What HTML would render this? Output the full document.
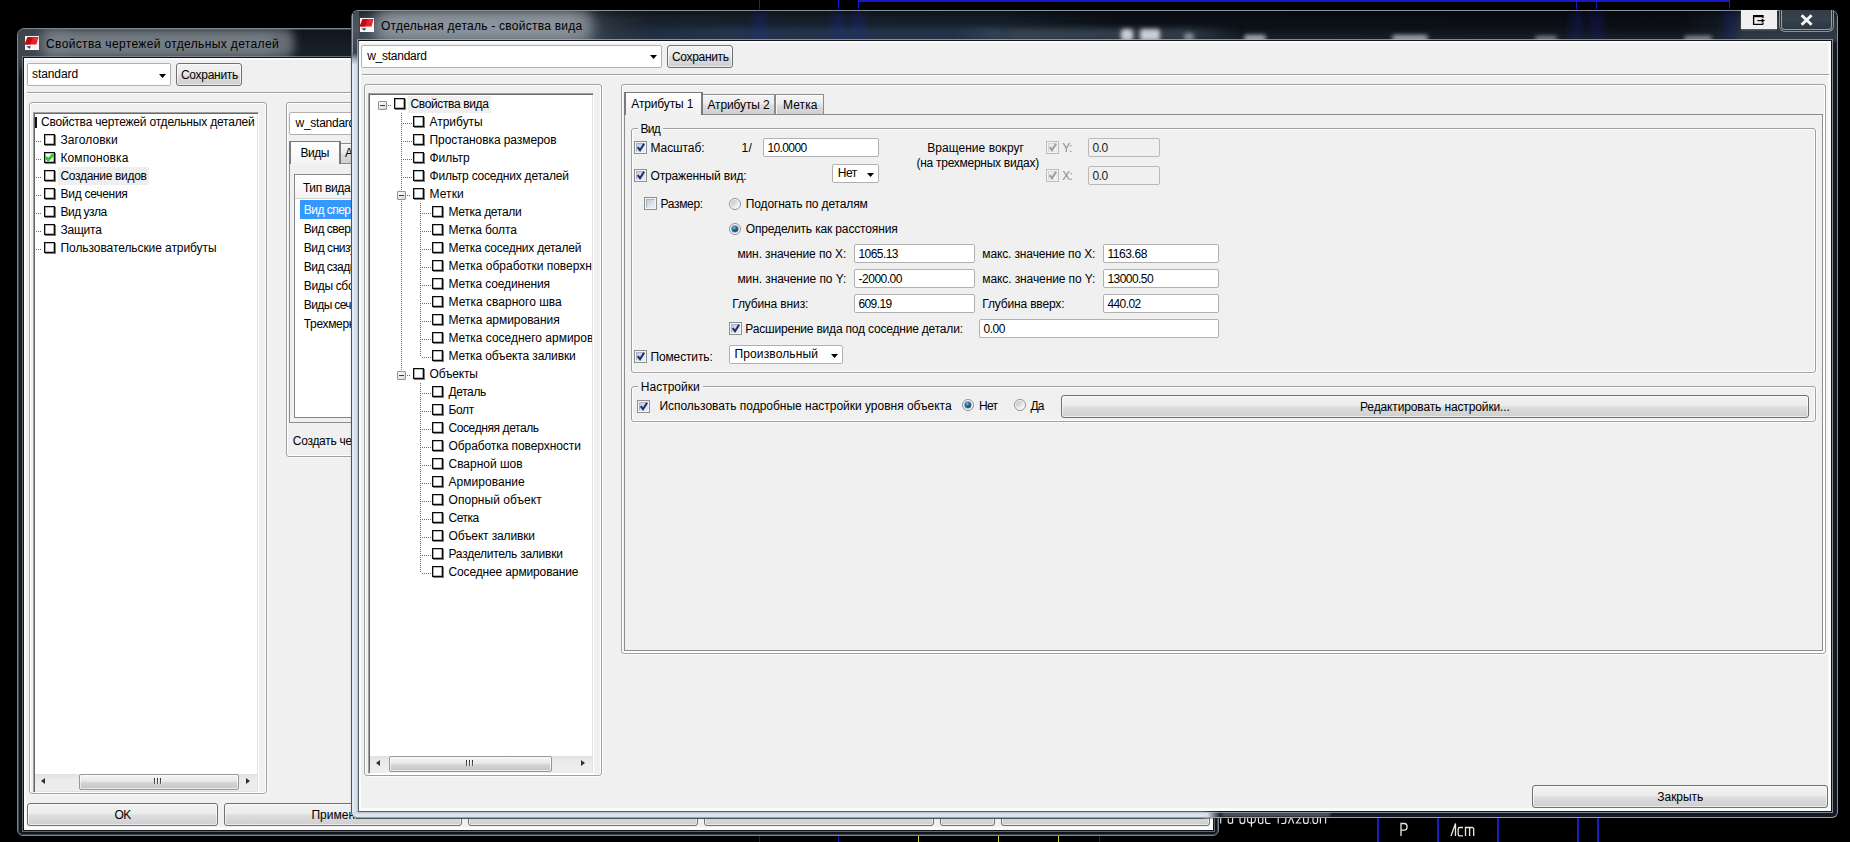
<!DOCTYPE html>
<html lang="ru"><head><meta charset="utf-8"><title>Tekla dialogs</title>
<style>
html,body{margin:0;padding:0;background:#000;}
body{width:1850px;height:842px;overflow:hidden;position:relative;font-family:"Liberation Sans", sans-serif;font-size:12px;line-height:16px;color:#000;}
div,span,svg{position:absolute;}
span{white-space:nowrap;height:16px;}
#cl{left:0;top:0;width:351px;height:842px;overflow:hidden}
</style></head><body>
<div style="left:858px;top:0.4px;width:871px;height:1.5px;background:#1818c4"></div>
<div style="left:758.75px;top:0px;width:1.5px;height:10px;background:linear-gradient(#1c1cc8 0,#1c1cc8 70%,rgba(28,28,200,.35))"></div>
<div style="left:837.75px;top:0px;width:1.5px;height:10px;background:linear-gradient(#1c1cc8 0,#1c1cc8 70%,rgba(28,28,200,.35))"></div>
<div style="left:857.75px;top:0px;width:1.5px;height:10px;background:linear-gradient(#1c1cc8 0,#1c1cc8 70%,rgba(28,28,200,.35))"></div>
<div style="left:1575.75px;top:0px;width:1.5px;height:10px;background:linear-gradient(#1c1cc8 0,#1c1cc8 70%,rgba(28,28,200,.35))"></div>
<div style="left:1595.75px;top:0px;width:1.5px;height:10px;background:linear-gradient(#1c1cc8 0,#1c1cc8 70%,rgba(28,28,200,.35))"></div>
<div style="left:1728.75px;top:0px;width:1.5px;height:10px;background:linear-gradient(#1c1cc8 0,#1c1cc8 70%,rgba(28,28,200,.35))"></div>
<div style="left:1376.5px;top:816px;width:2px;height:26px;background:#1c1cc4"></div>
<div style="left:1436.5px;top:816px;width:2px;height:26px;background:#1c1cc4"></div>
<div style="left:1496.5px;top:816px;width:2px;height:26px;background:#1c1cc4"></div>
<div style="left:1576.5px;top:816px;width:2px;height:26px;background:#1c1cc4"></div>
<div style="left:1596.5px;top:816px;width:2px;height:26px;background:#1c1cc4"></div>
<div style="left:759px;top:836px;width:1px;height:6px;background:#1414b8"></div>
<div style="left:838px;top:836px;width:1px;height:6px;background:#1414b8"></div>
<div style="left:918px;top:836px;width:1px;height:6px;background:#d8d838"></div>
<div style="left:998px;top:836px;width:1px;height:6px;background:#d8d838"></div>
<div style="left:1058px;top:836px;width:1px;height:6px;background:#d8d838"></div>
<div style="left:1099px;top:836px;width:1px;height:6px;background:#1414b8"></div>
<svg style="left:1398px;top:821px" width="80" height="18" viewBox="0 0 80 18"><g fill="none" stroke="#e8e8e8" stroke-width="1.3"><path d="M3 15V2.5h3.2a2.8 3.2 0 0 1 0 6.6H3"/><path d="M53 15 L57.5 2.5 V15"/><path d="M65 6.5h-3.2a1.6 1.6 0 0 0-1.6 1.6v5.2a1.6 1.6 0 0 0 1.6 1.6H65"/><path d="M67.5 15V6.5h6.8a1.4 1.4 0 0 1 1.4 1.4V15M71.6 6.5V15"/></g></svg>
<svg style="left:1219px;top:818px" width="112" height="10" viewBox="0 0 112 10"><g fill="none" stroke="#ececec" stroke-width="1.15" stroke-linecap="butt"><path d="M1.7 0V5.6"/><path d="M9.2 0.5V3.2a2.2 2.2 0 0 0 4.4 0V0M13.6 3V5.6"/><path d="M21 0V3.2a2.4 2.4 0 0 0 4.8 0V0"/><path d="M28.6 0V2.6a2.2 2.2 0 0 0 2.2 2.2h3.2a2.2 2.2 0 0 0 2.2-2.2V0M32.4 0V8.8"/><path d="M39.4 0V3.4a2.2 2.2 0 0 0 4.4 0V0M43.8 3V5.6"/><path d="M46.6 0V3.2a2.3 2.3 0 0 0 2.3 2.3h2.6"/><path d="M59.2 0V5.6"/><path d="M66.8 0V3.2a2.3 2.3 0 0 1-2.3 2.3h-2.3"/><path d="M69.4 5.6L71.6 0M74.8 5.6L72.6 0"/><path d="M81 0L77.4 5H82.4"/><path d="M84.6 0V3.2a2.3 2.3 0 0 0 4.6 0V0"/><path d="M91.6 4.4V5.6"/><path d="M94 0V3.2a2.3 2.3 0 0 0 4.6 0V0"/><path d="M101.4 0V5.6M106.6 0V5.6"/></g></svg>
<div id="bw" style="left:17px;top:28px;width:1202px;height:808px;border-radius:7px 7px 6px 6px;box-sizing:border-box;border:1px solid #7c848c;background:linear-gradient(#10151d 0,#1b232d 30px,#161c25 60px,#10151c 100%);box-shadow:inset 0 0 0 1px rgba(150,165,180,.35);overflow:hidden"><div style="left:-10px;top:-6px;width:60px;height:44px;background:rgba(66,74,82,.9);filter:blur(6px)"></div><div style="left:22px;top:-1px;width:254px;height:31px;background:rgba(108,116,124,.92);filter:blur(5px);border-radius:12px"></div><div style="left:30px;top:5px;width:226px;height:19px;background:rgba(150,158,166,.35);filter:blur(5px);border-radius:9px"></div></div>
<svg style="left:24px;top:36px" width="16" height="15" viewBox="0 0 16 15"><rect x="1" y="0" width="14" height="14" fill="#fbf4f6"/><path d="M3.6 1.1 H14.6 L12.4 8.4 H0.6 Z" fill="#e42028"/><path d="M3.6 1.1 H8.6 L6.4 8.4 H0.6 Z" fill="#c20810"/><path d="M9.5 2 L13.8 1.6 L12.6 5 Z" fill="#f04048" opacity=".7"/><path d="M2.2 10.2 H7 L5.6 12.8 Z" fill="#1a5058"/></svg>
<span style="left:46px;top:36px;letter-spacing:0.362px;">Свойства чертежей отдельных деталей</span>
<div style="left:23px;top:57px;width:1191px;height:774px;box-sizing:border-box;border:1px solid #10141a;background:#f0f0f0;box-shadow:0 0 0 1px rgba(160,170,182,.55),inset 2px 2px 0 #fbfbfb,inset -3px -3px 0 #fbfbfb"></div>
<div style="left:27px;top:63px;width:144px;height:23px;box-sizing:border-box;border:1px solid #b0b0b0;border-radius:2px;background:#fff"></div>
<span style="left:32px;top:66px;letter-spacing:-0.088px;">standard</span>
<svg style="left:159px;top:74px" width="7" height="4" viewBox="0 0 7 4"><path d="M0 0h7L3.5 4z" fill="#000"/></svg>
<div style="left:176px;top:63px;width:66px;height:23px;box-sizing:border-box;border:1px solid #707070;border-radius:3px;background:linear-gradient(#f2f2f2 0%,#ebebeb 48%,#dddddd 52%,#cfcfcf 100%);box-shadow:inset 0 0 0 1px rgba(255,255,255,.6)"></div>
<span style="left:181px;top:67px;letter-spacing:-0.293px;">Сохранить</span>
<div style="left:27px;top:92px;width:1183px;height:1px;background:#a0a0a0"></div>
<div style="left:27px;top:93px;width:1183px;height:1px;background:#fff"></div>
<div style="left:29px;top:102px;width:238px;height:692px;border:1px solid #a0a0a0;border-radius:3px;box-sizing:border-box;box-shadow:inset 0 0 0 1px #fff,1px 1px 0 rgba(255,255,255,.75)"></div>
<div style="left:33px;top:112px;width:226px;height:681px;box-sizing:border-box;background:#fff;border:1px solid;border-color:#a0a0a0 #fff #fff #a0a0a0;box-shadow:inset 1px 1px 0 #696969,inset -1px -1px 0 #e3e3e3"></div>
<div style="left:35px;top:117px;width:2px;height:11px;background:#111"></div>
<span style="left:41px;top:114px;letter-spacing:-0.195px;">Свойства чертежей отдельных деталей</span>
<div style="left:36px;top:141px;width:5px;height:1px;background:repeating-linear-gradient(90deg,#6a6a6a 0 1px,transparent 1px 2px)"></div>
<div style="left:44px;top:134px;width:11px;height:11px;box-sizing:border-box;border:1px solid #0a0a0a;background:#fff;box-shadow:1px 1px 0 rgba(0,0,0,.5),inset 0 0 0 .6px rgba(0,0,0,.55)"></div>
<span style="left:60.5px;top:132px;letter-spacing:0.067px;">Заголовки</span>
<div style="left:36px;top:159px;width:5px;height:1px;background:repeating-linear-gradient(90deg,#6a6a6a 0 1px,transparent 1px 2px)"></div>
<div style="left:44px;top:152px;width:11px;height:11px;box-sizing:border-box;border:1px solid #0a0a0a;background:#fff;box-shadow:1px 1px 0 rgba(0,0,0,.5),inset 0 0 0 .6px rgba(0,0,0,.55)"><svg style="left:0;top:0" width="9" height="9" viewBox="0 0 9 9"><path d="M0.6 4.0 L3.2 6.8 L8.4 1.2" fill="none" stroke="#28d028" stroke-width="2.9"/></svg></div>
<span style="left:60.5px;top:150px;letter-spacing:0.105px;">Компоновка</span>
<div style="left:58px;top:167px;width:91px;height:18px;background:#efefef"></div>
<div style="left:36px;top:177px;width:5px;height:1px;background:repeating-linear-gradient(90deg,#6a6a6a 0 1px,transparent 1px 2px)"></div>
<div style="left:44px;top:170px;width:11px;height:11px;box-sizing:border-box;border:1px solid #0a0a0a;background:#fff;box-shadow:1px 1px 0 rgba(0,0,0,.5),inset 0 0 0 .6px rgba(0,0,0,.55)"></div>
<span style="left:60.5px;top:168px;letter-spacing:-0.321px;">Создание видов</span>
<div style="left:36px;top:195px;width:5px;height:1px;background:repeating-linear-gradient(90deg,#6a6a6a 0 1px,transparent 1px 2px)"></div>
<div style="left:44px;top:188px;width:11px;height:11px;box-sizing:border-box;border:1px solid #0a0a0a;background:#fff;box-shadow:1px 1px 0 rgba(0,0,0,.5),inset 0 0 0 .6px rgba(0,0,0,.55)"></div>
<span style="left:60.5px;top:186px;letter-spacing:-0.271px;">Вид сечения</span>
<div style="left:36px;top:213px;width:5px;height:1px;background:repeating-linear-gradient(90deg,#6a6a6a 0 1px,transparent 1px 2px)"></div>
<div style="left:44px;top:206px;width:11px;height:11px;box-sizing:border-box;border:1px solid #0a0a0a;background:#fff;box-shadow:1px 1px 0 rgba(0,0,0,.5),inset 0 0 0 .6px rgba(0,0,0,.55)"></div>
<span style="left:60.5px;top:204px;letter-spacing:-0.487px;">Вид узла</span>
<div style="left:36px;top:231px;width:5px;height:1px;background:repeating-linear-gradient(90deg,#6a6a6a 0 1px,transparent 1px 2px)"></div>
<div style="left:44px;top:224px;width:11px;height:11px;box-sizing:border-box;border:1px solid #0a0a0a;background:#fff;box-shadow:1px 1px 0 rgba(0,0,0,.5),inset 0 0 0 .6px rgba(0,0,0,.55)"></div>
<span style="left:60.5px;top:222px;letter-spacing:-0.241px;">Защита</span>
<div style="left:36px;top:249px;width:5px;height:1px;background:repeating-linear-gradient(90deg,#6a6a6a 0 1px,transparent 1px 2px)"></div>
<div style="left:44px;top:242px;width:11px;height:11px;box-sizing:border-box;border:1px solid #0a0a0a;background:#fff;box-shadow:1px 1px 0 rgba(0,0,0,.5),inset 0 0 0 .6px rgba(0,0,0,.55)"></div>
<span style="left:60.5px;top:240px;letter-spacing:-0.074px;">Пользовательские атрибуты</span>
<div style="left:35px;top:774px;width:222px;height:17px;background:linear-gradient(#e2e2e2,#ebebeb 35%,#eeeeee)"></div>
<div style="left:79px;top:774px;width:160px;height:16px;box-sizing:border-box;border:1px solid #979797;border-radius:2px;background:linear-gradient(#f5f5f5 0%,#e8e8ea 45%,#d3d3d8 55%,#c3c3c9 100%);box-shadow:inset 0 0 0 1px rgba(255,255,255,.65)"></div>
<div style="left:154px;top:778px;width:1px;height:6px;background:linear-gradient(#2a2c30,#5a5e66);box-shadow:1px 0 0 rgba(255,255,255,.55)"></div>
<div style="left:157px;top:778px;width:1px;height:6px;background:linear-gradient(#2a2c30,#5a5e66);box-shadow:1px 0 0 rgba(255,255,255,.55)"></div>
<div style="left:160px;top:778px;width:1px;height:6px;background:linear-gradient(#2a2c30,#5a5e66);box-shadow:1px 0 0 rgba(255,255,255,.55)"></div>
<svg style="left:41px;top:778px" width="4" height="6" viewBox="0 0 4 6"><path d="M4 0v6L0 3z" fill="#303030"/></svg>
<svg style="left:246px;top:778px" width="4" height="6" viewBox="0 0 4 6"><path d="M0 0v6L4 3z" fill="#303030"/></svg>
<div style="left:286px;top:102px;width:921px;height:355px;border:1px solid #a0a0a0;border-radius:3px;box-sizing:border-box;box-shadow:inset 0 0 0 1px #fff,1px 1px 0 rgba(255,255,255,.75)"></div>
<div style="left:289px;top:112px;width:312px;height:23px;box-sizing:border-box;border:1px solid #b0b0b0;border-radius:2px;background:#fff"></div>
<span style="left:295.5px;top:115px;letter-spacing:-0.255px;">w_standard</span>
<svg style="left:580px;top:122px" width="7" height="4" viewBox="0 0 7 4"><path d="M0 0h7L3.5 4z" fill="#000"/></svg>
<div style="left:289px;top:163px;width:700px;height:260px;box-sizing:border-box;border:1px solid #8c8c8c;background:#f0f0f0"></div>
<div style="left:339px;top:143px;width:60px;height:20px;box-sizing:border-box;border:1px solid #8c8c8c;border-bottom:none;background:linear-gradient(#f4f4f4 0,#ececec 48%,#dedede 52%,#cfcfcf 100%);box-shadow:inset 1px 1px 0 rgba(255,255,255,.8)"></div>
<span style="left:345px;top:145px;letter-spacing:-0.043px;">Атрибуты</span>
<div style="left:289px;top:141px;width:52px;height:23px;box-sizing:border-box;border:1px solid #7a7a7a;border-left:2px solid #7a7a7a;border-right-width:2px;border-bottom:none;background:linear-gradient(#fff,#f4f4f4)"></div>
<span style="left:300.5px;top:144.5px;letter-spacing:-0.461px;">Виды</span>
<div style="left:294px;top:174px;width:600px;height:244px;box-sizing:border-box;border:1px solid #828790;background:#fff"></div>
<div style="left:295px;top:175px;width:598px;height:24px;background:linear-gradient(#fff,#f4f4f4);border-bottom:1px solid #d5d5d5;box-sizing:border-box"></div>
<span style="left:302.9px;top:180px;letter-spacing:-0.337px;">Тип вида</span>
<div style="left:300px;top:200px;width:400px;height:19px;background:#3399ff"></div>
<span style="left:303.8px;top:201.5px;letter-spacing:-0.520px;color:#fff;">Вид спереди</span>
<span style="left:303.8px;top:220.5px;letter-spacing:-0.500px;">Вид сверху</span>
<span style="left:303.8px;top:239.5px;letter-spacing:-0.439px;">Вид снизу</span>
<span style="left:303.8px;top:258.5px;letter-spacing:-0.549px;">Вид сзади</span>
<span style="left:303.8px;top:277.5px;letter-spacing:-0.351px;">Виды сбоку</span>
<span style="left:303.8px;top:296.5px;letter-spacing:-0.626px;">Виды сечений</span>
<span style="left:303.8px;top:315.5px;letter-spacing:-0.344px;">Трехмерный вид</span>
<span style="left:292.8px;top:433px;letter-spacing:-0.280px;">Создать чертежи</span>
<div style="left:27px;top:803px;width:191px;height:23px;box-sizing:border-box;border:1px solid #707070;border-radius:3px;background:linear-gradient(#f2f2f2 0%,#ebebeb 48%,#dddddd 52%,#cfcfcf 100%);box-shadow:inset 0 0 0 1px rgba(255,255,255,.6)"></div>
<span style="left:114.5px;top:807px;letter-spacing:-0.672px;">OK</span>
<div style="left:224px;top:803px;width:238px;height:23px;box-sizing:border-box;border:1px solid #707070;border-radius:3px;background:linear-gradient(#f2f2f2 0%,#ebebeb 48%,#dddddd 52%,#cfcfcf 100%);box-shadow:inset 0 0 0 1px rgba(255,255,255,.6)"></div>
<span style="left:311.5px;top:807px;letter-spacing:-0.002px;">Применить</span>
<div style="left:468px;top:803px;width:230px;height:23px;box-sizing:border-box;border:1px solid #707070;border-radius:3px;background:linear-gradient(#f2f2f2 0%,#ebebeb 48%,#dddddd 52%,#cfcfcf 100%);box-shadow:inset 0 0 0 1px rgba(255,255,255,.6)"></div>
<div style="left:704px;top:803px;width:230px;height:23px;box-sizing:border-box;border:1px solid #707070;border-radius:3px;background:linear-gradient(#f2f2f2 0%,#ebebeb 48%,#dddddd 52%,#cfcfcf 100%);box-shadow:inset 0 0 0 1px rgba(255,255,255,.6)"></div>
<div style="left:940px;top:803px;width:55px;height:23px;box-sizing:border-box;border:1px solid #707070;border-radius:3px;background:linear-gradient(#f2f2f2 0%,#ebebeb 48%,#dddddd 52%,#cfcfcf 100%);box-shadow:inset 0 0 0 1px rgba(255,255,255,.6)"></div>
<div style="left:1001px;top:803px;width:209px;height:23px;box-sizing:border-box;border:1px solid #707070;border-radius:3px;background:linear-gradient(#f2f2f2 0%,#ebebeb 48%,#dddddd 52%,#cfcfcf 100%);box-shadow:inset 0 0 0 1px rgba(255,255,255,.6)"></div>
<div id="fw" style="left:351px;top:10px;width:1487px;height:808px;border-radius:7px 7px 6px 6px;box-sizing:border-box;overflow:hidden;border:1px solid rgba(84,92,102,.9);border-top-color:#8a929a;border-right-color:#8a9098;border-bottom-color:#9aa2aa;background:#141a24;box-shadow:0 0 2px rgba(0,0,0,.18)"><div style="left:0;top:0;width:1485px;height:31px;background:linear-gradient(90deg,#3a444d 0,#414b54 24px,#4a545e 60px,#4a545e 200px,#414b55 232px,#27313d 262px,#1a2430 300px,#16202c 650px,#0c1118 760px,#0b0f16 1330px,#141b24 1375px,#2a333d 1392px,#2c353f 100%)"></div><div style="left:0;top:0;width:1485px;height:31px;background:linear-gradient(180deg,rgba(0,0,0,.45) 0,rgba(0,0,0,.12) 8px,rgba(0,0,0,0) 16px,rgba(60,80,100,.22) 27px,rgba(0,0,0,.15) 31px)"></div><div style="left:22px;top:-1px;width:218px;height:33px;background:rgba(130,139,148,.92);filter:blur(6px);border-radius:12px"></div><div style="left:34px;top:4px;width:192px;height:20px;background:rgba(160,168,176,.4);filter:blur(5px);border-radius:9px"></div><div style="left:0;top:18px;width:7px;height:820px;background:linear-gradient(90deg,#e6eef8,#d2deea 60%,#c0ccd8)"></div><div style="left:0;top:801px;width:869px;height:7px;background:linear-gradient(#ccd6e0,#dde5ee 50%,#d0d9e2)"></div><div style="left:0;top:0px;width:7px;height:54px;background:linear-gradient(180deg,#454e58 0,#4c555f 20px,#3a434d 42px,rgba(120,130,142,.6) 48px,rgba(230,238,248,0) 54px)"></div><div style="left:855px;top:801px;width:14px;height:7px;background:linear-gradient(90deg,rgba(20,26,36,0),#141a24)"></div></div>
<div style="left:600px;top:27px;width:400px;height:13px;background:linear-gradient(90deg,rgba(40,62,96,.0),rgba(40,62,96,.5) 30%,rgba(40,62,96,.5) 100%);filter:blur(2px)"></div>
<div style="left:955px;top:28px;width:285px;height:13px;background:linear-gradient(90deg,rgba(84,98,112,0),rgba(80,94,108,.55) 22%,rgba(70,84,98,.6) 80%,rgba(70,84,98,0));filter:blur(3px)"></div>
<div style="left:1121px;top:29px;width:12px;height:12px;background:rgba(238,242,246,0.8);filter:blur(2.2px);border-radius:3px"></div>
<div style="left:1140px;top:29px;width:20px;height:12px;background:rgba(238,242,246,0.8);filter:blur(2.2px);border-radius:3px"></div>
<div style="left:1184px;top:33px;width:10px;height:8px;background:rgba(238,242,246,0.45);filter:blur(2.2px);border-radius:3px"></div>
<div style="left:1244px;top:35px;width:22px;height:6px;background:rgba(238,242,246,0.7);filter:blur(2.2px);border-radius:3px"></div>
<div style="left:1392px;top:35px;width:36px;height:6px;background:rgba(238,242,246,0.65);filter:blur(2.2px);border-radius:3px"></div>
<div style="left:1535px;top:36px;width:22px;height:5px;background:rgba(238,242,246,0.5);filter:blur(2.2px);border-radius:3px"></div>
<div style="left:1684px;top:36px;width:28px;height:5px;background:rgba(238,242,246,0.55);filter:blur(2.2px);border-radius:3px"></div>
<div style="left:753px;top:11px;width:13px;height:29px;background:rgba(30,40,190,.2);filter:blur(3.5px)"></div>
<div style="left:832px;top:11px;width:13px;height:29px;background:rgba(30,40,190,.2);filter:blur(3.5px)"></div>
<div style="left:852px;top:11px;width:13px;height:29px;background:rgba(30,40,190,.2);filter:blur(3.5px)"></div>
<div style="left:1570px;top:11px;width:13px;height:29px;background:rgba(30,40,190,.2);filter:blur(3.5px)"></div>
<div style="left:1590px;top:11px;width:13px;height:29px;background:rgba(30,40,190,.2);filter:blur(3.5px)"></div>
<div style="left:1723px;top:11px;width:13px;height:29px;background:rgba(30,40,190,.2);filter:blur(3.5px)"></div>
<div style="left:1222px;top:813px;width:108px;height:3px;background:rgba(210,218,226,.42);filter:blur(1.6px)"></div>
<svg style="left:359px;top:18px" width="16" height="15" viewBox="0 0 16 15"><rect x="1" y="0" width="14" height="14" fill="#fbf4f6"/><path d="M3.6 1.1 H14.6 L12.4 8.4 H0.6 Z" fill="#e42028"/><path d="M3.6 1.1 H8.6 L6.4 8.4 H0.6 Z" fill="#c20810"/><path d="M9.5 2 L13.8 1.6 L12.6 5 Z" fill="#f04048" opacity=".7"/><path d="M2.2 10.2 H7 L5.6 12.8 Z" fill="#1a5058"/></svg>
<span style="left:381px;top:18px;letter-spacing:0.251px;">Отдельная деталь - свойства вида</span>
<div style="left:1741px;top:10px;width:36px;height:19px;background:#f0f0f0;box-shadow:0 1px 2px rgba(200,210,220,.35)"></div>
<svg style="left:1752px;top:14px" width="14" height="12" viewBox="0 0 14 12"><path d="M1 1h10v2.2H1z" fill="#000"/><path d="M1.6 1v9.4H11M11 1v3M11 8.6v1.8" fill="none" stroke="#000" stroke-width="1.3"/><path d="M5.4 6.6H10" stroke="#000" stroke-width="1.2"/><path d="M9.6 4.4L13 6.6 9.6 8.8z" fill="#000"/></svg>
<div style="left:1779px;top:10px;width:55px;height:22px;box-sizing:border-box;border:1px solid #8a939b;border-top:none;border-radius:0 0 6px 6px;background:#2b343e"></div>
<div style="left:1781px;top:10px;width:51px;height:20px;box-sizing:border-box;border:1px solid #97a0a8;border-top:none;border-radius:0 0 4px 4px;background:linear-gradient(#333d47,#38424c 50%,#2e3741)"></div>
<svg style="left:1800px;top:14px" width="14" height="12" viewBox="0 0 14 12"><path d="M1.6 1.2 L11.6 10.8 M11.6 1.2 L1.6 10.8" fill="none" stroke="#f6f6f6" stroke-width="2.9"/></svg>
<div style="left:358px;top:40px;width:1474px;height:772px;box-sizing:border-box;border:1px solid #10141a;border-left-color:#5a626a;background:#f0f0f0;box-shadow:0 0 0 1px rgba(176,186,198,.7),inset 2px 2px 0 #fbfbfb,inset -3px -3px 0 #fbfbfb"></div>
<div style="left:356px;top:818px;width:862px;height:1px;background:linear-gradient(90deg,#4c545c 0,#4c545c 98%,rgba(76,84,92,0))"></div>
<div style="left:358px;top:811px;width:860px;height:1px;background:linear-gradient(90deg,#5a626a 0,#5a626a 98%,rgba(90,98,106,0))"></div>
<div style="left:358px;top:58px;width:1px;height:754px;background:#5a626a"></div>
<div style="left:352px;top:14px;width:1px;height:46px;background:linear-gradient(rgba(165,175,188,.85) 0,rgba(165,175,188,.85) 80%,rgba(165,175,188,0))"></div>
<div style="left:361px;top:45px;width:301px;height:23px;box-sizing:border-box;border:1px solid #b0b0b0;border-radius:2px;background:#fff"></div>
<span style="left:367.2px;top:47.5px;letter-spacing:-0.255px;">w_standard</span>
<svg style="left:650px;top:55px" width="7" height="4" viewBox="0 0 7 4"><path d="M0 0h7L3.5 4z" fill="#000"/></svg>
<div style="left:667px;top:45px;width:66px;height:23px;box-sizing:border-box;border:1px solid #707070;border-radius:3px;background:linear-gradient(#f2f2f2 0%,#ebebeb 48%,#dddddd 52%,#cfcfcf 100%);box-shadow:inset 0 0 0 1px rgba(255,255,255,.6)"></div>
<span style="left:672px;top:49px;letter-spacing:-0.327px;">Сохранить</span>
<div style="left:362px;top:74px;width:1467px;height:1px;background:#a0a0a0"></div>
<div style="left:362px;top:75px;width:1467px;height:1px;background:#fff"></div>
<div style="left:364px;top:84px;width:238px;height:692px;border:1px solid #a0a0a0;border-radius:3px;box-sizing:border-box;box-shadow:inset 0 0 0 1px #fff,1px 1px 0 rgba(255,255,255,.75)"></div>
<div style="left:368px;top:93px;width:226px;height:681px;box-sizing:border-box;background:#fff;border:1px solid;border-color:#a0a0a0 #fff #fff #a0a0a0;box-shadow:inset 1px 1px 0 #696969,inset -1px -1px 0 #e3e3e3"></div>
<div style="left:369px;top:94px;width:223px;height:662px;overflow:hidden">
<div style="left:39px;top:2px;width:83px;height:17px;background:#efefef"></div>
<div style="left:32px;top:19px;width:1px;height:257px;background:repeating-linear-gradient(180deg,#6a6a6a 0 1px,transparent 1px 2px)"></div>
<div style="left:51px;top:109px;width:1px;height:154px;background:repeating-linear-gradient(180deg,#6a6a6a 0 1px,transparent 1px 2px)"></div>
<div style="left:51px;top:289px;width:1px;height:190px;background:repeating-linear-gradient(180deg,#6a6a6a 0 1px,transparent 1px 2px)"></div>
<div style="left:9px;top:7px;width:9px;height:9px;box-sizing:border-box;border:1px solid #919191;border-radius:1px;background:linear-gradient(135deg,#fff,#d8d8d8)"><div style="left:1px;top:3px;width:5px;height:1px;background:#3a3a3a"></div></div>
<div style="left:19px;top:11px;width:3px;height:1px;background:repeating-linear-gradient(90deg,#6a6a6a 0 1px,transparent 1px 2px)"></div>
<div style="left:25px;top:4px;width:11px;height:11px;box-sizing:border-box;border:1px solid #0a0a0a;background:#fff;box-shadow:1px 1px 0 rgba(0,0,0,.5),inset 0 0 0 .6px rgba(0,0,0,.55)"></div>
<span style="left:41.5px;top:2px;letter-spacing:-0.368px;">Свойства вида</span>
<div style="left:34px;top:29px;width:9px;height:1px;background:repeating-linear-gradient(90deg,#6a6a6a 0 1px,transparent 1px 2px)"></div>
<div style="left:44px;top:22px;width:11px;height:11px;box-sizing:border-box;border:1px solid #0a0a0a;background:#fff;box-shadow:1px 1px 0 rgba(0,0,0,.5),inset 0 0 0 .6px rgba(0,0,0,.55)"></div>
<span style="left:60.5px;top:20px;letter-spacing:-0.018px;">Атрибуты</span>
<div style="left:34px;top:47px;width:9px;height:1px;background:repeating-linear-gradient(90deg,#6a6a6a 0 1px,transparent 1px 2px)"></div>
<div style="left:44px;top:40px;width:11px;height:11px;box-sizing:border-box;border:1px solid #0a0a0a;background:#fff;box-shadow:1px 1px 0 rgba(0,0,0,.5),inset 0 0 0 .6px rgba(0,0,0,.55)"></div>
<span style="left:60.5px;top:38px;letter-spacing:-0.079px;">Простановка размеров</span>
<div style="left:34px;top:65px;width:9px;height:1px;background:repeating-linear-gradient(90deg,#6a6a6a 0 1px,transparent 1px 2px)"></div>
<div style="left:44px;top:58px;width:11px;height:11px;box-sizing:border-box;border:1px solid #0a0a0a;background:#fff;box-shadow:1px 1px 0 rgba(0,0,0,.5),inset 0 0 0 .6px rgba(0,0,0,.55)"></div>
<span style="left:60.5px;top:56px;letter-spacing:-0.035px;">Фильтр</span>
<div style="left:34px;top:83px;width:9px;height:1px;background:repeating-linear-gradient(90deg,#6a6a6a 0 1px,transparent 1px 2px)"></div>
<div style="left:44px;top:76px;width:11px;height:11px;box-sizing:border-box;border:1px solid #0a0a0a;background:#fff;box-shadow:1px 1px 0 rgba(0,0,0,.5),inset 0 0 0 .6px rgba(0,0,0,.55)"></div>
<span style="left:60.5px;top:74px;letter-spacing:-0.215px;">Фильтр соседних деталей</span>
<div style="left:28px;top:97px;width:9px;height:9px;box-sizing:border-box;border:1px solid #919191;border-radius:1px;background:linear-gradient(135deg,#fff,#d8d8d8)"><div style="left:1px;top:3px;width:5px;height:1px;background:#3a3a3a"></div></div>
<div style="left:38px;top:101px;width:3px;height:1px;background:repeating-linear-gradient(90deg,#6a6a6a 0 1px,transparent 1px 2px)"></div>
<div style="left:44px;top:94px;width:11px;height:11px;box-sizing:border-box;border:1px solid #0a0a0a;background:#fff;box-shadow:1px 1px 0 rgba(0,0,0,.5),inset 0 0 0 .6px rgba(0,0,0,.55)"></div>
<span style="left:60.5px;top:92px;letter-spacing:0.108px;">Метки</span>
<div style="left:53px;top:119px;width:9px;height:1px;background:repeating-linear-gradient(90deg,#6a6a6a 0 1px,transparent 1px 2px)"></div>
<div style="left:63px;top:112px;width:11px;height:11px;box-sizing:border-box;border:1px solid #0a0a0a;background:#fff;box-shadow:1px 1px 0 rgba(0,0,0,.5),inset 0 0 0 .6px rgba(0,0,0,.55)"></div>
<span style="left:79.5px;top:110px;letter-spacing:-0.296px;">Метка детали</span>
<div style="left:53px;top:137px;width:9px;height:1px;background:repeating-linear-gradient(90deg,#6a6a6a 0 1px,transparent 1px 2px)"></div>
<div style="left:63px;top:130px;width:11px;height:11px;box-sizing:border-box;border:1px solid #0a0a0a;background:#fff;box-shadow:1px 1px 0 rgba(0,0,0,.5),inset 0 0 0 .6px rgba(0,0,0,.55)"></div>
<span style="left:79.5px;top:128px;letter-spacing:-0.141px;">Метка болта</span>
<div style="left:53px;top:155px;width:9px;height:1px;background:repeating-linear-gradient(90deg,#6a6a6a 0 1px,transparent 1px 2px)"></div>
<div style="left:63px;top:148px;width:11px;height:11px;box-sizing:border-box;border:1px solid #0a0a0a;background:#fff;box-shadow:1px 1px 0 rgba(0,0,0,.5),inset 0 0 0 .6px rgba(0,0,0,.55)"></div>
<span style="left:79.5px;top:146px;letter-spacing:-0.245px;">Метка соседних деталей</span>
<div style="left:53px;top:173px;width:9px;height:1px;background:repeating-linear-gradient(90deg,#6a6a6a 0 1px,transparent 1px 2px)"></div>
<div style="left:63px;top:166px;width:11px;height:11px;box-sizing:border-box;border:1px solid #0a0a0a;background:#fff;box-shadow:1px 1px 0 rgba(0,0,0,.5),inset 0 0 0 .6px rgba(0,0,0,.55)"></div>
<span style="left:79.5px;top:164px;letter-spacing:-0.015px;">Метка обработки поверхности</span>
<div style="left:53px;top:191px;width:9px;height:1px;background:repeating-linear-gradient(90deg,#6a6a6a 0 1px,transparent 1px 2px)"></div>
<div style="left:63px;top:184px;width:11px;height:11px;box-sizing:border-box;border:1px solid #0a0a0a;background:#fff;box-shadow:1px 1px 0 rgba(0,0,0,.5),inset 0 0 0 .6px rgba(0,0,0,.55)"></div>
<span style="left:79.5px;top:182px;letter-spacing:-0.124px;">Метка соединения</span>
<div style="left:53px;top:209px;width:9px;height:1px;background:repeating-linear-gradient(90deg,#6a6a6a 0 1px,transparent 1px 2px)"></div>
<div style="left:63px;top:202px;width:11px;height:11px;box-sizing:border-box;border:1px solid #0a0a0a;background:#fff;box-shadow:1px 1px 0 rgba(0,0,0,.5),inset 0 0 0 .6px rgba(0,0,0,.55)"></div>
<span style="left:79.5px;top:200px;letter-spacing:0.018px;">Метка сварного шва</span>
<div style="left:53px;top:227px;width:9px;height:1px;background:repeating-linear-gradient(90deg,#6a6a6a 0 1px,transparent 1px 2px)"></div>
<div style="left:63px;top:220px;width:11px;height:11px;box-sizing:border-box;border:1px solid #0a0a0a;background:#fff;box-shadow:1px 1px 0 rgba(0,0,0,.5),inset 0 0 0 .6px rgba(0,0,0,.55)"></div>
<span style="left:79.5px;top:218px;letter-spacing:-0.037px;">Метка армирования</span>
<div style="left:53px;top:245px;width:9px;height:1px;background:repeating-linear-gradient(90deg,#6a6a6a 0 1px,transparent 1px 2px)"></div>
<div style="left:63px;top:238px;width:11px;height:11px;box-sizing:border-box;border:1px solid #0a0a0a;background:#fff;box-shadow:1px 1px 0 rgba(0,0,0,.5),inset 0 0 0 .6px rgba(0,0,0,.55)"></div>
<span style="left:79.5px;top:236px;letter-spacing:-0.015px;">Метка соседнего армирования</span>
<div style="left:53px;top:263px;width:9px;height:1px;background:repeating-linear-gradient(90deg,#6a6a6a 0 1px,transparent 1px 2px)"></div>
<div style="left:63px;top:256px;width:11px;height:11px;box-sizing:border-box;border:1px solid #0a0a0a;background:#fff;box-shadow:1px 1px 0 rgba(0,0,0,.5),inset 0 0 0 .6px rgba(0,0,0,.55)"></div>
<span style="left:79.5px;top:254px;letter-spacing:-0.125px;">Метка объекта заливки</span>
<div style="left:28px;top:277px;width:9px;height:9px;box-sizing:border-box;border:1px solid #919191;border-radius:1px;background:linear-gradient(135deg,#fff,#d8d8d8)"><div style="left:1px;top:3px;width:5px;height:1px;background:#3a3a3a"></div></div>
<div style="left:38px;top:281px;width:3px;height:1px;background:repeating-linear-gradient(90deg,#6a6a6a 0 1px,transparent 1px 2px)"></div>
<div style="left:44px;top:274px;width:11px;height:11px;box-sizing:border-box;border:1px solid #0a0a0a;background:#fff;box-shadow:1px 1px 0 rgba(0,0,0,.5),inset 0 0 0 .6px rgba(0,0,0,.55)"></div>
<span style="left:60.5px;top:272px;letter-spacing:-0.186px;">Объекты</span>
<div style="left:53px;top:299px;width:9px;height:1px;background:repeating-linear-gradient(90deg,#6a6a6a 0 1px,transparent 1px 2px)"></div>
<div style="left:63px;top:292px;width:11px;height:11px;box-sizing:border-box;border:1px solid #0a0a0a;background:#fff;box-shadow:1px 1px 0 rgba(0,0,0,.5),inset 0 0 0 .6px rgba(0,0,0,.55)"></div>
<span style="left:79.5px;top:290px;letter-spacing:-0.384px;">Деталь</span>
<div style="left:53px;top:317px;width:9px;height:1px;background:repeating-linear-gradient(90deg,#6a6a6a 0 1px,transparent 1px 2px)"></div>
<div style="left:63px;top:310px;width:11px;height:11px;box-sizing:border-box;border:1px solid #0a0a0a;background:#fff;box-shadow:1px 1px 0 rgba(0,0,0,.5),inset 0 0 0 .6px rgba(0,0,0,.55)"></div>
<span style="left:79.5px;top:308px;letter-spacing:-0.349px;">Болт</span>
<div style="left:53px;top:335px;width:9px;height:1px;background:repeating-linear-gradient(90deg,#6a6a6a 0 1px,transparent 1px 2px)"></div>
<div style="left:63px;top:328px;width:11px;height:11px;box-sizing:border-box;border:1px solid #0a0a0a;background:#fff;box-shadow:1px 1px 0 rgba(0,0,0,.5),inset 0 0 0 .6px rgba(0,0,0,.55)"></div>
<span style="left:79.5px;top:326px;letter-spacing:-0.405px;">Соседняя деталь</span>
<div style="left:53px;top:353px;width:9px;height:1px;background:repeating-linear-gradient(90deg,#6a6a6a 0 1px,transparent 1px 2px)"></div>
<div style="left:63px;top:346px;width:11px;height:11px;box-sizing:border-box;border:1px solid #0a0a0a;background:#fff;box-shadow:1px 1px 0 rgba(0,0,0,.5),inset 0 0 0 .6px rgba(0,0,0,.55)"></div>
<span style="left:79.5px;top:344px;letter-spacing:-0.080px;">Обработка поверхности</span>
<div style="left:53px;top:371px;width:9px;height:1px;background:repeating-linear-gradient(90deg,#6a6a6a 0 1px,transparent 1px 2px)"></div>
<div style="left:63px;top:364px;width:11px;height:11px;box-sizing:border-box;border:1px solid #0a0a0a;background:#fff;box-shadow:1px 1px 0 rgba(0,0,0,.5),inset 0 0 0 .6px rgba(0,0,0,.55)"></div>
<span style="left:79.5px;top:362px;letter-spacing:-0.026px;">Сварной шов</span>
<div style="left:53px;top:389px;width:9px;height:1px;background:repeating-linear-gradient(90deg,#6a6a6a 0 1px,transparent 1px 2px)"></div>
<div style="left:63px;top:382px;width:11px;height:11px;box-sizing:border-box;border:1px solid #0a0a0a;background:#fff;box-shadow:1px 1px 0 rgba(0,0,0,.5),inset 0 0 0 .6px rgba(0,0,0,.55)"></div>
<span style="left:79.5px;top:380px;letter-spacing:0.036px;">Армирование</span>
<div style="left:53px;top:407px;width:9px;height:1px;background:repeating-linear-gradient(90deg,#6a6a6a 0 1px,transparent 1px 2px)"></div>
<div style="left:63px;top:400px;width:11px;height:11px;box-sizing:border-box;border:1px solid #0a0a0a;background:#fff;box-shadow:1px 1px 0 rgba(0,0,0,.5),inset 0 0 0 .6px rgba(0,0,0,.55)"></div>
<span style="left:79.5px;top:398px;letter-spacing:0.045px;">Опорный объект</span>
<div style="left:53px;top:425px;width:9px;height:1px;background:repeating-linear-gradient(90deg,#6a6a6a 0 1px,transparent 1px 2px)"></div>
<div style="left:63px;top:418px;width:11px;height:11px;box-sizing:border-box;border:1px solid #0a0a0a;background:#fff;box-shadow:1px 1px 0 rgba(0,0,0,.5),inset 0 0 0 .6px rgba(0,0,0,.55)"></div>
<span style="left:79.5px;top:416px;letter-spacing:-0.505px;">Сетка</span>
<div style="left:53px;top:443px;width:9px;height:1px;background:repeating-linear-gradient(90deg,#6a6a6a 0 1px,transparent 1px 2px)"></div>
<div style="left:63px;top:436px;width:11px;height:11px;box-sizing:border-box;border:1px solid #0a0a0a;background:#fff;box-shadow:1px 1px 0 rgba(0,0,0,.5),inset 0 0 0 .6px rgba(0,0,0,.55)"></div>
<span style="left:79.5px;top:434px;letter-spacing:-0.150px;">Объект заливки</span>
<div style="left:53px;top:461px;width:9px;height:1px;background:repeating-linear-gradient(90deg,#6a6a6a 0 1px,transparent 1px 2px)"></div>
<div style="left:63px;top:454px;width:11px;height:11px;box-sizing:border-box;border:1px solid #0a0a0a;background:#fff;box-shadow:1px 1px 0 rgba(0,0,0,.5),inset 0 0 0 .6px rgba(0,0,0,.55)"></div>
<span style="left:79.5px;top:452px;letter-spacing:-0.243px;">Разделитель заливки</span>
<div style="left:53px;top:479px;width:9px;height:1px;background:repeating-linear-gradient(90deg,#6a6a6a 0 1px,transparent 1px 2px)"></div>
<div style="left:63px;top:472px;width:11px;height:11px;box-sizing:border-box;border:1px solid #0a0a0a;background:#fff;box-shadow:1px 1px 0 rgba(0,0,0,.5),inset 0 0 0 .6px rgba(0,0,0,.55)"></div>
<span style="left:79.5px;top:470px;letter-spacing:-0.137px;">Соседнее армирование</span>
</div>
<div style="left:370px;top:756px;width:222px;height:17px;background:linear-gradient(#e2e2e2,#ebebeb 35%,#eeeeee)"></div>
<div style="left:389px;top:756px;width:163px;height:16px;box-sizing:border-box;border:1px solid #979797;border-radius:2px;background:linear-gradient(#f5f5f5 0%,#e8e8ea 45%,#d3d3d8 55%,#c3c3c9 100%);box-shadow:inset 0 0 0 1px rgba(255,255,255,.65)"></div>
<div style="left:466px;top:760px;width:1px;height:6px;background:linear-gradient(#2a2c30,#5a5e66);box-shadow:1px 0 0 rgba(255,255,255,.55)"></div>
<div style="left:469px;top:760px;width:1px;height:6px;background:linear-gradient(#2a2c30,#5a5e66);box-shadow:1px 0 0 rgba(255,255,255,.55)"></div>
<div style="left:472px;top:760px;width:1px;height:6px;background:linear-gradient(#2a2c30,#5a5e66);box-shadow:1px 0 0 rgba(255,255,255,.55)"></div>
<svg style="left:376px;top:760px" width="4" height="6" viewBox="0 0 4 6"><path d="M4 0v6L0 3z" fill="#303030"/></svg>
<svg style="left:581px;top:760px" width="4" height="6" viewBox="0 0 4 6"><path d="M0 0v6L4 3z" fill="#303030"/></svg>
<div style="left:621px;top:84px;width:1205px;height:570px;border:1px solid #a0a0a0;border-radius:3px;box-sizing:border-box;box-shadow:inset 0 0 0 1px #fff,1px 1px 0 rgba(255,255,255,.75)"></div>
<div style="left:624px;top:114px;width:1199px;height:537px;box-sizing:border-box;border:1px solid #8c8c8c;background:#f0f0f0;box-shadow:1px 1px 0 #fff"></div>
<div style="left:701px;top:94px;width:75px;height:20px;box-sizing:border-box;border:1px solid #8c8c8c;border-right-width:2px;border-bottom:none;background:linear-gradient(#f4f4f4 0,#ececec 48%,#dedede 52%,#cfcfcf 100%);box-shadow:inset 1px 1px 0 rgba(255,255,255,.8)"></div>
<span style="left:707.5px;top:97px;letter-spacing:-0.136px;">Атрибуты 2</span>
<div style="left:776px;top:94px;width:48px;height:20px;box-sizing:border-box;border:1px solid #8c8c8c;border-left:none;border-bottom:none;background:linear-gradient(#f4f4f4 0,#ececec 48%,#dedede 52%,#cfcfcf 100%);box-shadow:inset 1px 1px 0 rgba(255,255,255,.8)"></div>
<span style="left:783px;top:97px;letter-spacing:0.081px;">Метка</span>
<div style="left:624px;top:92px;width:79px;height:23px;box-sizing:border-box;border:1px solid #7a7a7a;border-left-width:2px;border-right-width:2px;border-bottom:none;background:linear-gradient(#fff,#f6f6f6 60%,#f0f0f0)"></div>
<span style="left:631.3px;top:96px;letter-spacing:-0.136px;">Атрибуты 1</span>
<div style="left:631px;top:128px;width:1185px;height:245px;border:1px solid #a0a0a0;border-radius:3px;box-sizing:border-box;box-shadow:inset 0 0 0 1px #fff,1px 1px 0 rgba(255,255,255,.75)"></div>
<div style="left:637.5px;top:126px;width:25.5px;height:5px;background:#f0f0f0"></div>
<span style="left:640.5px;top:121px;letter-spacing:-0.740px;">Вид</span>
<div style="left:634px;top:141px;width:13px;height:13px;box-sizing:border-box;border:1px solid #8e8f8f;background:#f4f4f4"><div style="left:1px;top:1px;width:9px;height:9px;background:linear-gradient(135deg,#bfcbdc,#edf1f7);border:1px solid #aab4c2;border-right-color:#e4e8ee;border-bottom-color:#e4e8ee;box-sizing:border-box"></div><svg style="left:0;top:0" width="11" height="11" viewBox="0 0 11 11"><path d="M2.7 5.2 L5.0 8.2 L9.1 1.7" fill="none" stroke="#1e2e72" stroke-width="2.1" stroke-linecap="butt" stroke-linejoin="miter"/></svg></div>
<span style="left:650.5px;top:140px;letter-spacing:-0.086px;">Масштаб:</span>
<span style="left:741.5px;top:140px;letter-spacing:0.392px;">1/</span>
<div style="left:763px;top:138px;width:116px;height:19px;box-sizing:border-box;border:1px solid #b0b0b0;border-radius:2px;background:#fff"></div>
<span style="left:767.5px;top:140px;letter-spacing:-0.627px;">10.0000</span>
<div style="left:634px;top:169px;width:13px;height:13px;box-sizing:border-box;border:1px solid #8e8f8f;background:#f4f4f4"><div style="left:1px;top:1px;width:9px;height:9px;background:linear-gradient(135deg,#bfcbdc,#edf1f7);border:1px solid #aab4c2;border-right-color:#e4e8ee;border-bottom-color:#e4e8ee;box-sizing:border-box"></div><svg style="left:0;top:0" width="11" height="11" viewBox="0 0 11 11"><path d="M2.7 5.2 L5.0 8.2 L9.1 1.7" fill="none" stroke="#1e2e72" stroke-width="2.1" stroke-linecap="butt" stroke-linejoin="miter"/></svg></div>
<span style="left:650.5px;top:168px;letter-spacing:-0.148px;">Отраженный вид:</span>
<div style="left:832px;top:164px;width:47px;height:19px;box-sizing:border-box;border:1px solid #b0b0b0;border-radius:2px;background:#fff"></div>
<span style="left:837.8px;top:165px;letter-spacing:-0.446px;">Нет</span>
<svg style="left:867px;top:173px" width="7" height="4" viewBox="0 0 7 4"><path d="M0 0h7L3.5 4z" fill="#000"/></svg>
<span style="left:927.3px;top:140px;letter-spacing:0.027px;">Вращение вокруг</span>
<span style="left:916.5px;top:155px;letter-spacing:-0.274px;">(на трехмерных видах)</span>
<div style="left:1046px;top:141px;width:13px;height:13px;box-sizing:border-box;border:1px solid #bcbcbc;background:#f4f4f4"><div style="left:1px;top:1px;width:9px;height:9px;background:linear-gradient(135deg,#e6e8ec,#f6f7f9);border:1px solid #d4d7db;border-right-color:#e4e8ee;border-bottom-color:#e4e8ee;box-sizing:border-box"></div><svg style="left:0;top:0" width="11" height="11" viewBox="0 0 11 11"><path d="M2.7 5.2 L5.0 8.2 L9.1 1.7" fill="none" stroke="#9aa0a8" stroke-width="2.1" stroke-linecap="butt" stroke-linejoin="miter"/></svg></div>
<span style="left:1062.2px;top:140px;letter-spacing:-0.644px;color:#8c8c8c;">Y:</span>
<div style="left:1088px;top:138px;width:72px;height:19px;box-sizing:border-box;border:1px solid #b9b9b9;border-radius:2px;background:#f0f0f0"></div>
<span style="left:1092.5px;top:140px;letter-spacing:-0.562px;color:#202020;">0.0</span>
<div style="left:1046px;top:169px;width:13px;height:13px;box-sizing:border-box;border:1px solid #bcbcbc;background:#f4f4f4"><div style="left:1px;top:1px;width:9px;height:9px;background:linear-gradient(135deg,#e6e8ec,#f6f7f9);border:1px solid #d4d7db;border-right-color:#e4e8ee;border-bottom-color:#e4e8ee;box-sizing:border-box"></div><svg style="left:0;top:0" width="11" height="11" viewBox="0 0 11 11"><path d="M2.7 5.2 L5.0 8.2 L9.1 1.7" fill="none" stroke="#9aa0a8" stroke-width="2.1" stroke-linecap="butt" stroke-linejoin="miter"/></svg></div>
<span style="left:1062.2px;top:168px;letter-spacing:-0.800px;color:#8c8c8c;">X:</span>
<div style="left:1088px;top:166px;width:72px;height:19px;box-sizing:border-box;border:1px solid #b9b9b9;border-radius:2px;background:#f0f0f0"></div>
<span style="left:1092.5px;top:168px;letter-spacing:-0.562px;color:#202020;">0.0</span>
<div style="left:644px;top:197px;width:13px;height:13px;box-sizing:border-box;border:1px solid #8e8f8f;background:#f4f4f4"><div style="left:1px;top:1px;width:9px;height:9px;background:linear-gradient(135deg,#bfcbdc,#edf1f7);border:1px solid #aab4c2;border-right-color:#e4e8ee;border-bottom-color:#e4e8ee;box-sizing:border-box"></div></div>
<span style="left:660.4px;top:196px;letter-spacing:-0.297px;">Размер:</span>
<div style="left:729px;top:198px;width:12px;height:12px;box-sizing:border-box;border:1px solid #8e8f8f;border-radius:50%;background:#fafafa"><div style="left:1px;top:1px;width:8px;height:8px;border-radius:50%;background:linear-gradient(135deg,#bdbdbd,#f8f8f8 85%)"></div></div>
<span style="left:745.8px;top:196px;letter-spacing:-0.149px;">Подогнать по деталям</span>
<div style="left:729px;top:223px;width:12px;height:12px;box-sizing:border-box;border:1px solid #8e8f8f;border-radius:50%;background:#fafafa"><div style="left:1px;top:1px;width:8px;height:8px;border-radius:50%;background:linear-gradient(135deg,#a8bccc,#eef4f8 85%)"></div><div style="left:2px;top:2px;width:6px;height:6px;border-radius:50%;background:radial-gradient(circle at 38% 32%,#76d0f2 0%,#1f6a96 36%,#0b2e48 100%);box-shadow:0 0 0 .6px rgba(14,52,82,.55)"></div></div>
<span style="left:745.8px;top:221px;letter-spacing:-0.147px;">Определить как расстояния</span>
<span style="left:737.4px;top:246px;letter-spacing:-0.111px;">мин. значение по X:</span>
<div style="left:854px;top:244px;width:121px;height:19px;box-sizing:border-box;border:1px solid #b0b0b0;border-radius:2px;background:#fff"></div>
<span style="left:858.5px;top:246px;letter-spacing:-0.556px;">1065.13</span>
<span style="left:982.3px;top:246px;letter-spacing:-0.131px;">макс. значение по X:</span>
<div style="left:1103px;top:244px;width:116px;height:19px;box-sizing:border-box;border:1px solid #b0b0b0;border-radius:2px;background:#fff"></div>
<span style="left:1107.5px;top:246px;letter-spacing:-0.429px;">1163.68</span>
<span style="left:737.4px;top:271px;letter-spacing:-0.075px;">мин. значение по Y:</span>
<div style="left:854px;top:269px;width:121px;height:19px;box-sizing:border-box;border:1px solid #b0b0b0;border-radius:2px;background:#fff"></div>
<span style="left:858.5px;top:271px;letter-spacing:-0.484px;">-2000.00</span>
<span style="left:982.3px;top:271px;letter-spacing:-0.098px;">макс. значение по Y:</span>
<div style="left:1103px;top:269px;width:116px;height:19px;box-sizing:border-box;border:1px solid #b0b0b0;border-radius:2px;background:#fff"></div>
<span style="left:1107.5px;top:271px;letter-spacing:-0.570px;">13000.50</span>
<span style="left:732.2px;top:296px;letter-spacing:-0.125px;">Глубина вниз:</span>
<div style="left:854px;top:294px;width:121px;height:19px;box-sizing:border-box;border:1px solid #b0b0b0;border-radius:2px;background:#fff"></div>
<span style="left:858.5px;top:296px;letter-spacing:-0.617px;">609.19</span>
<span style="left:982.3px;top:296px;letter-spacing:-0.167px;">Глубина вверх:</span>
<div style="left:1103px;top:294px;width:116px;height:19px;box-sizing:border-box;border:1px solid #b0b0b0;border-radius:2px;background:#fff"></div>
<span style="left:1107.5px;top:296px;letter-spacing:-0.617px;">440.02</span>
<div style="left:729px;top:322px;width:13px;height:13px;box-sizing:border-box;border:1px solid #8e8f8f;background:#f4f4f4"><div style="left:1px;top:1px;width:9px;height:9px;background:linear-gradient(135deg,#bfcbdc,#edf1f7);border:1px solid #aab4c2;border-right-color:#e4e8ee;border-bottom-color:#e4e8ee;box-sizing:border-box"></div><svg style="left:0;top:0" width="11" height="11" viewBox="0 0 11 11"><path d="M2.7 5.2 L5.0 8.2 L9.1 1.7" fill="none" stroke="#1e2e72" stroke-width="2.1" stroke-linecap="butt" stroke-linejoin="miter"/></svg></div>
<span style="left:745.3px;top:321px;letter-spacing:-0.196px;">Расширение вида под соседние детали:</span>
<div style="left:979px;top:319px;width:240px;height:19px;box-sizing:border-box;border:1px solid #b0b0b0;border-radius:2px;background:#fff"></div>
<span style="left:983.5px;top:321px;letter-spacing:-0.465px;">0.00</span>
<div style="left:634px;top:350px;width:13px;height:13px;box-sizing:border-box;border:1px solid #8e8f8f;background:#f4f4f4"><div style="left:1px;top:1px;width:9px;height:9px;background:linear-gradient(135deg,#bfcbdc,#edf1f7);border:1px solid #aab4c2;border-right-color:#e4e8ee;border-bottom-color:#e4e8ee;box-sizing:border-box"></div><svg style="left:0;top:0" width="11" height="11" viewBox="0 0 11 11"><path d="M2.7 5.2 L5.0 8.2 L9.1 1.7" fill="none" stroke="#1e2e72" stroke-width="2.1" stroke-linecap="butt" stroke-linejoin="miter"/></svg></div>
<span style="left:650.5px;top:349px;letter-spacing:-0.142px;">Поместить:</span>
<div style="left:729px;top:345px;width:114px;height:19px;box-sizing:border-box;border:1px solid #b0b0b0;border-radius:2px;background:#fff"></div>
<span style="left:734.5px;top:346px;letter-spacing:0.121px;">Произвольный</span>
<svg style="left:831px;top:354px" width="7" height="4" viewBox="0 0 7 4"><path d="M0 0h7L3.5 4z" fill="#000"/></svg>
<div style="left:631px;top:386px;width:1185px;height:36px;border:1px solid #a0a0a0;border-radius:3px;box-sizing:border-box;box-shadow:inset 0 0 0 1px #fff,1px 1px 0 rgba(255,255,255,.75)"></div>
<div style="left:637.8px;top:384px;width:64.9px;height:5px;background:#f0f0f0"></div>
<span style="left:640.8px;top:378.5px;letter-spacing:0.006px;">Настройки</span>
<div style="left:637px;top:400px;width:13px;height:13px;box-sizing:border-box;border:1px solid #8e8f8f;background:#f4f4f4"><div style="left:1px;top:1px;width:9px;height:9px;background:linear-gradient(135deg,#bfcbdc,#edf1f7);border:1px solid #aab4c2;border-right-color:#e4e8ee;border-bottom-color:#e4e8ee;box-sizing:border-box"></div><svg style="left:0;top:0" width="11" height="11" viewBox="0 0 11 11"><path d="M2.7 5.2 L5.0 8.2 L9.1 1.7" fill="none" stroke="#1e2e72" stroke-width="2.1" stroke-linecap="butt" stroke-linejoin="miter"/></svg></div>
<span style="left:659.4px;top:397.5px;letter-spacing:-0.014px;">Использовать подробные настройки уровня объекта</span>
<div style="left:962px;top:399px;width:12px;height:12px;box-sizing:border-box;border:1px solid #8e8f8f;border-radius:50%;background:#fafafa"><div style="left:1px;top:1px;width:8px;height:8px;border-radius:50%;background:linear-gradient(135deg,#a8bccc,#eef4f8 85%)"></div><div style="left:2px;top:2px;width:6px;height:6px;border-radius:50%;background:radial-gradient(circle at 38% 32%,#76d0f2 0%,#1f6a96 36%,#0b2e48 100%);box-shadow:0 0 0 .6px rgba(14,52,82,.55)"></div></div>
<span style="left:978.9px;top:397.5px;letter-spacing:-0.612px;">Нет</span>
<div style="left:1014px;top:399px;width:12px;height:12px;box-sizing:border-box;border:1px solid #8e8f8f;border-radius:50%;background:#fafafa"><div style="left:1px;top:1px;width:8px;height:8px;border-radius:50%;background:linear-gradient(135deg,#bdbdbd,#f8f8f8 85%)"></div></div>
<span style="left:1030.5px;top:397.5px;letter-spacing:-0.800px;">Да</span>
<div style="left:1061px;top:395px;width:748px;height:23px;box-sizing:border-box;border:1px solid #707070;border-radius:3px;background:linear-gradient(#f2f2f2 0%,#ebebeb 48%,#dddddd 52%,#cfcfcf 100%);box-shadow:inset 0 0 0 1px rgba(255,255,255,.6)"></div>
<span style="left:1360px;top:399px;letter-spacing:-0.128px;">Редактировать настройки...</span>
<div style="left:1532px;top:785px;width:296px;height:23px;box-sizing:border-box;border:1px solid #707070;border-radius:3px;background:linear-gradient(#f2f2f2 0%,#ebebeb 48%,#dddddd 52%,#cfcfcf 100%);box-shadow:inset 0 0 0 1px rgba(255,255,255,.6)"></div>
<span style="left:1657.3px;top:789px;letter-spacing:-0.046px;">Закрыть</span>
</body></html>
